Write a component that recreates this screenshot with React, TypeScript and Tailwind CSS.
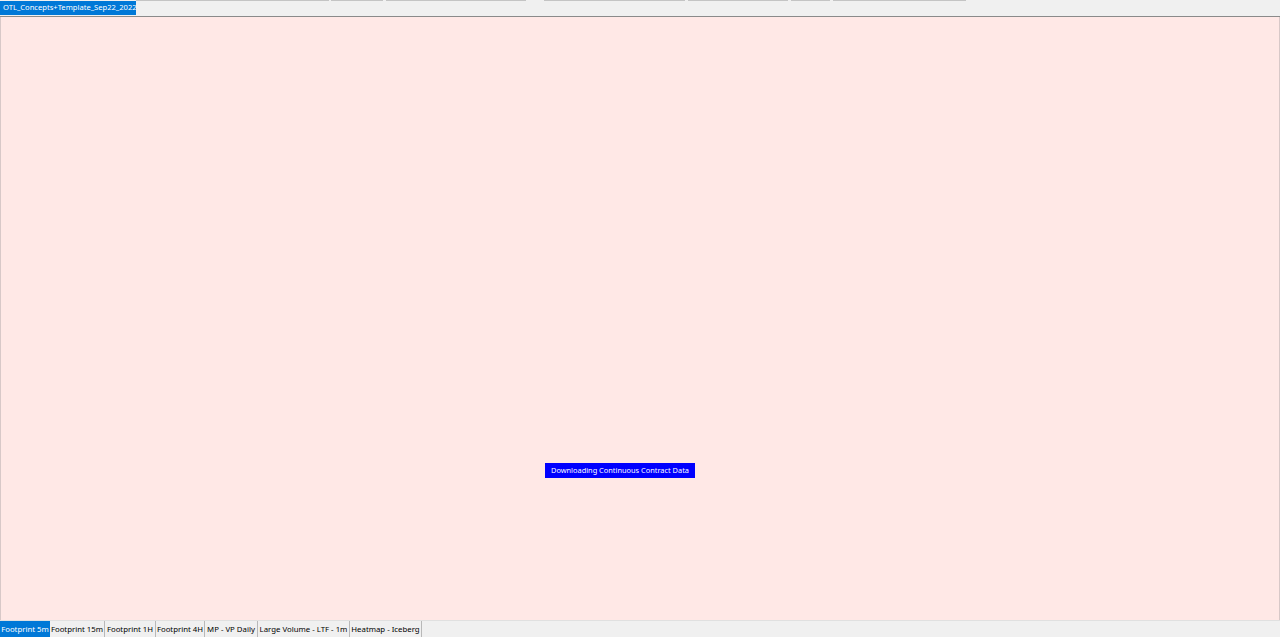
const topSegments = [
  { left: 136, width: 193 },
  { left: 331, width: 52 },
  { left: 386, width: 140 },
  { left: 544, width: 141 },
  { left: 688, width: 100 },
  { left: 791, width: 39 },
  { left: 833, width: 133 },
];

// widths measured from the chartbook tab strip
const tabs = [
  { label: "Footprint 5m", w: "w-[50px]" },
  { label: "Footprint 15m", w: "w-[55px]" },
  { label: "Footprint 1H", w: "w-[51px]" },
  { label: "Footprint 4H", w: "w-[49px]" },
  { label: "MP - VP Daily", w: "w-[53px]" },
  { label: "Large Volume - LTF - 1m", w: "w-[92px]" },
  { label: "Heatmap - Iceberg", w: "w-[72px]" },
];

export default function App() {
  return (
    <div
      className="flex h-[637px] w-[1280px] flex-col overflow-hidden bg-[#f0f0f0] text-[7.8px] leading-none"
      style={{ fontFamily: '"Noto Sans", "Open Sans", sans-serif' }}
    >
      {/* top workspace bar */}
      <div className="relative h-[17px] shrink-0 border-b border-[#8a8a8a] bg-[#f0f0f0]">
        {topSegments.map((s) => (
          <div
            key={s.left}
            className="absolute top-0 h-px bg-[#c4c4c4]"
            style={{ left: s.left, width: s.width }}
          />
        ))}
        <div className="absolute left-0 top-[1px] flex h-[14px] w-[136px] items-center overflow-hidden whitespace-nowrap bg-[#0078d7] pl-[3px] text-[7.6px] text-white">
          OTL_Concepts+Template_Sep22_2022
        </div>
      </div>

      {/* chart area */}
      <div className="relative flex-1 border-l border-r border-[#d8c8c8] bg-[#ffe8e6]">
        <div className="absolute left-[544px] top-[446px] flex h-[15px] w-[150px] items-center justify-center whitespace-nowrap bg-[#0000ff] text-[7.4px] text-white">
          Downloading Continuous Contract Data
        </div>
      </div>

      {/* bottom chartbook tabs */}
      <div className="flex h-[17px] shrink-0 items-stretch border-t border-[#e0e0e0] bg-[#f0f0f0]">
        {tabs.map((t, i) => (
          <div
            key={t.label}
            className={
              i === 0
                ? `flex ${t.w} items-center justify-center whitespace-nowrap bg-[#0078d7] pt-px text-white`
                : `flex ${t.w} items-center justify-center whitespace-nowrap border-r border-[#b8b8b8] pt-px text-black`
            }
          >
            {t.label}
          </div>
        ))}
      </div>
    </div>
  );
}
